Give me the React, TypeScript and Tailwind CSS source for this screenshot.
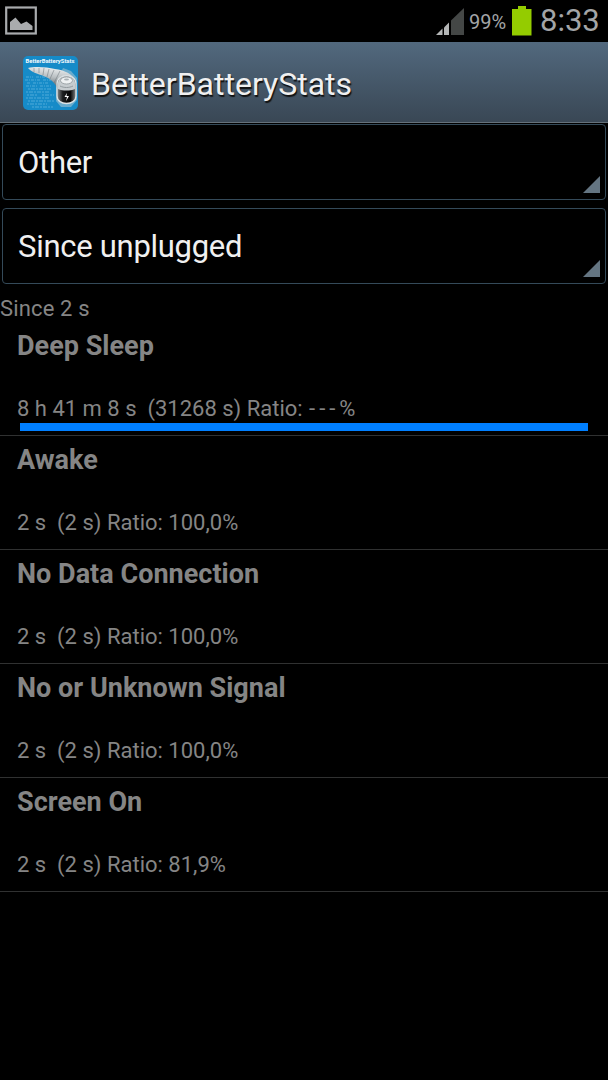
const stats = [
  { name: 'Deep Sleep', detail: '8 h 41 m 8 s  (31268 s) Ratio: ', ratio: '---', progress: 100 },
  { name: 'Awake', detail: '2 s  (2 s) Ratio: ', ratio: '100,0', progress: 0 },
  { name: 'No Data Connection', detail: '2 s  (2 s) Ratio: ', ratio: '100,0', progress: 0 },
  { name: 'No or Unknown Signal', detail: '2 s  (2 s) Ratio: ', ratio: '100,0', progress: 0 },
  { name: 'Screen On', detail: '2 s  (2 s) Ratio: ', ratio: '81,9', progress: 0 },
];

function StatusBar() {
  return (
    <div className="flex h-[42px] items-start bg-black text-[#a3a5a7]">
      <svg className="ml-[5px] mt-[6px]" width="32" height="29" viewBox="0 0 32 29">
        <rect x="1.2" y="1.5" width="29.6" height="26" fill="none" stroke="#a9abad" strokeWidth="2.2" />
        <path d="M5 24V16L10.500 11.500L16 18L21.500 15.500L27.500 20V24Z" fill="#a9abad" />
      </svg>

      {/* Signal */}
      <svg className="ml-auto mt-[8px]" width="28" height="28" viewBox="0 0 28 28">
        <path d="M15 12.500L28 0V27H15Z" fill="#444746" />
        <path d="M0 27L6.500 20.500V27Z" fill="#b4b6b6" />
        <path d="M8 19.500L13 14.500V27H8Z" fill="#b4b6b6" />
      </svg>
      <span className="ml-[5px] mt-[9px] w-[43px] whitespace-nowrap text-[20px] leading-[26px]">99%</span>

      {/* Battery */}
      <svg className="mt-[6px]" width="20" height="30" viewBox="0 0 20 30">
        <path d="M6 0H14V3H19.500V29.500H0V3H6Z" fill="#94cc00" />
      </svg>
      <span className="ml-[8px] mr-[9px] mt-[3px] w-[59px] whitespace-nowrap text-[31px] leading-[36px]">8:33</span>
    </div>
  );
}

function AppIcon() {
  return (
    <svg width="55" height="55" viewBox="0 0 55 55">
      <defs>
        <linearGradient id="tail" x1="0.3" y1="0" x2="0.1" y2="1">
          <stop offset="0" stopColor="#e8ebec" />
          <stop offset="0.35" stopColor="#b9bfc2" />
          <stop offset="0.8" stopColor="#4b5357" />
        </linearGradient>
        <linearGradient id="cell" x1="0" y1="0" x2="1" y2="0">
          <stop offset="0" stopColor="#8b8f91" />
          <stop offset="0.3" stopColor="#1b1d1e" />
          <stop offset="0.7" stopColor="#050505" />
          <stop offset="1" stopColor="#85898b" />
        </linearGradient>
      </defs>
      <rect width="55" height="54" rx="5" fill="#168bc8" />
      <g fill="none" stroke="#5cb6e0" strokeWidth="1.2" opacity="0.8">
        <path d="M3 21H10M13 21H22M2 24H18M20 24H28M4 27H8M10 27H25M3 30H14M17 30H29" strokeDasharray="3 1 1 1" />
        <path d="M5 33H29M3 36H26M4 39H15M19 39H31M3 42H26M5 45H32M4 48H24M9 51H30" strokeDasharray="2 1 4 1" />
      </g>
      <path d="M40 12L48 15L54 22V44L48 51H38L33 45V27Z" fill="#8dbbd0" opacity="0.7" />
      <path d="M5 12C12 10 24 11 32 13C41 14 50 18 53 25L50 31L35 36C34 29 30 25 25 22C18 18 10 18 5 12Z" fill="url(#tail)" />
      <g fill="none" stroke="#626c71" strokeWidth="0.8" opacity="0.6">
        <path d="M11 12L11 16M16 12L16 17M21 12L20 19M26 13L24 21M31 14L27 23M37 15L31 27" />
      </g>
      <path d="M34 28C34 17 53 17 53 28V40C53 50 34 50 34 40Z" fill="url(#cell)" stroke="#dce3e6" strokeWidth="1.3" />
      <path d="M35 33V27C35 18 52 18 52 27V33C47 35 40 35 35 33Z" fill="#c6cccf" />
      <ellipse cx="43.500" cy="24.500" rx="6" ry="3.500" fill="#eef1f2" stroke="#8f979b" strokeWidth="0.8" />
      <ellipse cx="43.500" cy="23.500" rx="2.500" ry="1" fill="#a8b0b4" />
      <path d="M37 30C41 32 46 32 50 30" stroke="#929a9e" fill="none" />
      <path d="M44 37L41.500 41H44L43 45L46 40H43.500Z" fill="#ffffff" />
      <text x="2.500" y="6.500" fontSize="6" fontWeight="700" textLength="49" lengthAdjust="spacingAndGlyphs" fill="#f4f9fc">
        BetterBatteryStats
      </text>
    </svg>
  );
}

function Spinner({ label }: { label: string }) {
  return (
    <div className="flex h-[76px] justify-between rounded-[4px] border border-[#344a59] bg-black pl-[15px] pr-[5px]">
      <span className="pt-[20px] text-[31px] leading-[36px] tracking-[-0.28px] text-[#f0f0f0]">{label}</span>
      <svg className="mb-[6px] self-end" width="17" height="17" viewBox="0 0 17 17">
        <path d="M17 0V17H0Z" fill="#647582" />
      </svg>
    </div>
  );
}

export default function App() {
  return (
    <div className="flex h-[1080px] w-[608px] flex-col overflow-hidden bg-black font-[Roboto,sans-serif]">
      <StatusBar />

      <header className="mb-px flex h-[81px] shrink-0 items-start border-b border-[#65717a] bg-linear-to-b from-[#52697e] to-[#394755] pl-[23px] pt-[14px]">
        <AppIcon />
        <h1 className="ml-[13px] mt-[10px] whitespace-nowrap text-[32px] leading-[36px] text-[#f0f0f0] [text-shadow:1px_2px_1px_#111]">
          BetterBatteryStats
        </h1>
      </header>

      <div className="flex flex-col gap-[8px] px-[2px]">
        <Spinner label="Other" />
        <Spinner label="Since unplugged" />
      </div>

      <p className="h-[38px] pt-[12px] text-[22px] leading-[26px] tracking-[0.15px] text-[#858585]">Since 2 s</p>

      <ul>
        {stats.map((stat) => (
          <li key={stat.name} className="flex h-[114px] flex-col border-b border-[#303131] pl-[17px] pr-[20px] text-[#858585]">
            <h2 className="pt-[8px] text-[27px] font-bold leading-[32px] tracking-[0.02px]">{stat.name}</h2>
            <p className="mt-[34px] whitespace-pre text-[22px] leading-[26px]">
              {stat.detail}
              <span className={stat.ratio === '---' ? 'ml-[1px] tracking-[4px]' : ''}>{stat.ratio}</span>%
            </p>
            {stat.progress > 0 && (
              <div className="ml-[3px] mt-px h-[8px]">
                <div className="h-full bg-[#007fff]" style={{ width: `${stat.progress}%` }} />
              </div>
            )}
          </li>
        ))}
      </ul>
    </div>
  );
}
